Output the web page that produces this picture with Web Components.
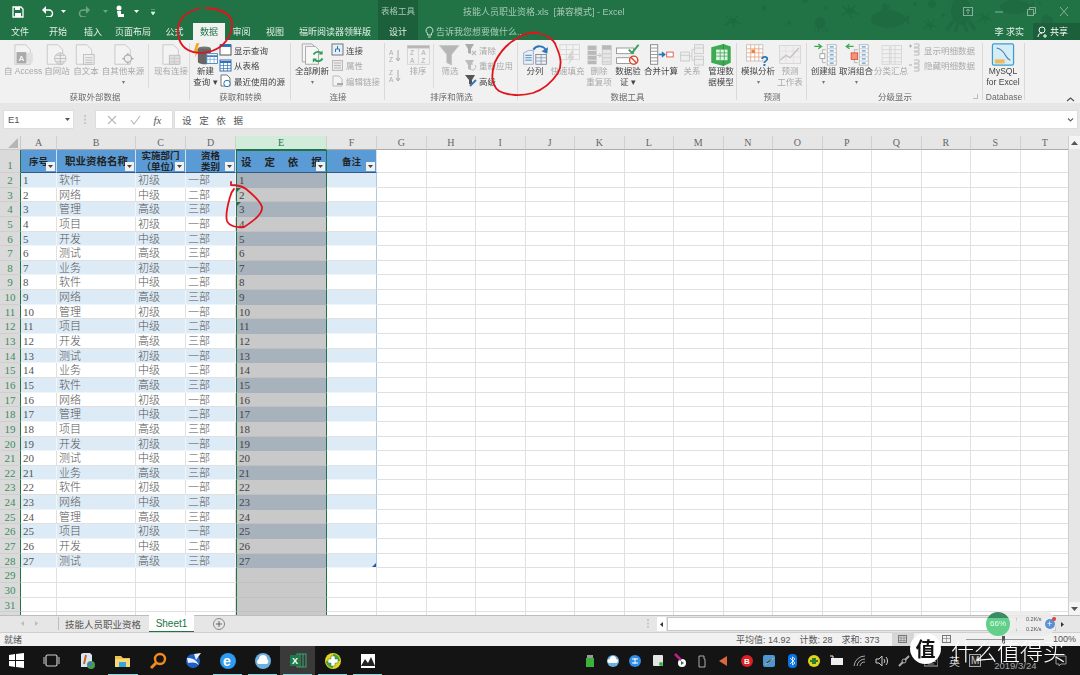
<!DOCTYPE html>
<html lang="zh">
<head>
<meta charset="utf-8">
<title>Excel</title>
<style>
  html, body { margin: 0; padding: 0; background: #e6e6e6; }
  body { width: 1080px; height: 675px; overflow: hidden; font-family: "Liberation Sans", "Noto Sans CJK SC", sans-serif; }
</style>
</head>
<body>
<excel-app>
  <excel-titlebar></excel-titlebar>
  <excel-ribbon>
    <rb-group w="190" label="获取外部数据" gap="4">
      <rb-big w="38" icon="access" off>自 Access</rb-big>
      <rb-big w="30" icon="web" off>自网站</rb-big>
      <rb-big w="28" icon="text" off>自文本</rb-big>
      <rb-big w="46" icon="other" off caret>自其他来源</rb-big>
      <rb-sep></rb-sep>
      <rb-big w="40" icon="exist" off>现有连接</rb-big>
    </rb-group>
    <rb-group w="101" label="获取和转换" gap="2">
      <rb-big w="27" icon="query">新建<br>查询 ▾</rb-big>
      <rb-col>
        <rb-small icon="showq">显示查询</rb-small>
        <rb-small icon="table">从表格</rb-small>
        <rb-small icon="recent">最近使用的源</rb-small>
      </rb-col>
    </rb-group>
    <rb-group w="94" label="连接" gap="2">
      <rb-big w="38" icon="refresh" caret>全部刷新</rb-big>
      <rb-col>
        <rb-small icon="conn">连接</rb-small>
        <rb-small icon="prop" off>属性</rb-small>
        <rb-small icon="link" off>编辑链接</rb-small>
      </rb-col>
    </rb-group>
    <rb-group w="133" label="排序和筛选" gap="4">
      <rb-col narrow>
        <rb-small icon="az" off></rb-small>
        <rb-small icon="za" off></rb-small>
      </rb-col>
      <rb-big w="26" icon="sort" off>排序</rb-big>
      <rb-sep></rb-sep>
      <rb-big w="28" icon="filter" off>筛选</rb-big>
      <rb-col>
        <rb-small icon="clear" off>清除</rb-small>
        <rb-small icon="reapply" off>重新应用</rb-small>
        <rb-small icon="adv">高级</rb-small>
      </rb-col>
    </rb-group>
    <rb-group w="219" label="数据工具" gap="3">
      <rb-big w="28" icon="split">分列</rb-big>
      <rb-big w="37" icon="flash" off>快速填充</rb-big>
      <rb-big w="26" icon="dedup" off>删除<br>重复项</rb-big>
      <rb-big w="32" icon="valid">数据验<br>证 ▾</rb-big>
      <rb-big w="34" icon="merge">合并计算</rb-big>
      <rb-big w="28" icon="rel" off>关系</rb-big>
      <rb-big w="30" icon="model">管理数<br>据模型</rb-big>
    </rb-group>
    <rb-group w="70" label="预测" gap="1">
      <rb-big w="40" icon="whatif" caret>模拟分析</rb-big>
      <rb-big w="24" icon="fore" off>预测<br>工作表</rb-big>
    </rb-group>
    <rb-group w="176" label="分级显示" gap="1" launcher>
      <rb-big w="31" icon="group" caret>创建组</rb-big>
      <rb-big w="34" icon="ungroup" caret>取消组合</rb-big>
      <rb-big w="36" icon="subtotal" off>分类汇总</rb-big>
      <rb-col>
        <rb-small icon="plus" off>显示明细数据</rb-small>
        <rb-small icon="minus" off>隐藏明细数据</rb-small>
      </rb-col>
    </rb-group>
    <rb-group w="42" label="Database" gap="0">
      <rb-big w="40" icon="mysql">MySQL<br>for Excel</rb-big>
    </rb-group>
    <rb-collapse></rb-collapse>
  </excel-ribbon>
  <excel-formula></excel-formula>
  <excel-sheet></excel-sheet>
  <excel-tabs></excel-tabs>
  <excel-status></excel-status>
  <win-taskbar></win-taskbar>
  <pen-marks></pen-marks>
  <speed-ball></speed-ball>
  <site-mark></site-mark>
</excel-app>

<script>
const ICONS = {
  access: `<path d="M6 2h13l6 6v18H6z" fill="#f4f4f4" stroke="#b5b5b5"/><rect x="12" y="12" width="16" height="12" fill="#ddd"/><rect x="8" y="11" width="12" height="14" fill="#999"/><text x="10.5" y="22" font-size="10" font-weight="700" fill="#f4f4f4" font-family="Liberation Sans">A</text>`,
  web: `<path d="M4 2h13l6 6v18H4z" fill="#f4f4f4" stroke="#b5b5b5"/><circle cx="20" cy="19" r="7" fill="#eee" stroke="#aaa"/><path d="M13 19h14M20 12v14M15 15h10M15 23h10" stroke="#aaa" fill="none"/>`,
  text: `<path d="M4 2h13l6 6v18H4z" fill="#f4f4f4" stroke="#b5b5b5"/><rect x="13" y="14" width="13" height="12" fill="#eee" stroke="#aaa"/><path d="M15 18h9M15 21h9M15 24h9" stroke="#aaa"/>`,
  other: `<path d="M6 2h13l6 6v18H6z" fill="#f4f4f4" stroke="#b5b5b5"/><circle cx="22" cy="19" r="4.500" fill="#eee" stroke="#999" stroke-width="1.400"/><path d="M22 12v3M22 23v3M15 19h3M26 19h3" stroke="#999" stroke-width="1.400"/>`,
  exist: `<path d="M6 2h13l6 6v18H6z" fill="#f4f4f4" stroke="#b5b5b5"/><path d="M14 15h13v11H14z" fill="#ddd" stroke="#aaa"/><path d="M14 19h13M14 23h13M20 15v11" stroke="#bbb"/>`,
  query: `<path d="M4 0l-3 10h3l-2 8 7-11H5l3-7z" fill="#f5a623"/><ellipse cx="14" cy="7" rx="8" ry="3" fill="#777"/><path d="M6 7v16c0 2 4 3 8 3h3V12h5V7z" fill="#666"/><rect x="17" y="13" width="13" height="12" fill="#fff" stroke="#2e75b6"/><path d="M17 16h13" stroke="#2e75b6" stroke-width="2"/><path d="M17 20h13M21 16v9M26 16v9" stroke="#6a9fd0" stroke-width=".8"/>`,
  refresh: `<path d="M4 1h12l4 4v18H4z" fill="#f7f7f7" stroke="#999"/><path d="M8 4h12l4 4v18H8z" fill="#f7f7f7" stroke="#999"/><path d="M18 14a6 6 0 0 1 10-1M29 19a6 6 0 0 1-10 1" stroke="#2e9e5b" stroke-width="2.400" fill="none"/><path d="M29 9v5h-5zM17 24v-5h5z" fill="#2e9e5b"/>`,
  sort: `<rect x="3" y="3" width="27" height="23" fill="#f2f2f2" stroke="#c8c8c8"/><rect x="3" y="3" width="27" height="3.500" fill="#aaa"/><path d="M16.500 6v20" stroke="#c8c8c8"/><text x="6" y="15" font-size="8" fill="#999" font-family="Liberation Sans">Z</text><text x="6" y="24" font-size="8" fill="#999" font-family="Liberation Sans">A</text><text x="20" y="15" font-size="8" fill="#999" font-family="Liberation Sans">A</text><text x="20" y="24" font-size="8" fill="#999" font-family="Liberation Sans">Z</text>`,
  filter: `<path d="M3 3h24L18 14v13l-6-3V14z" fill="#a8a8a8" stroke="#bbb"/>`,
  split: `<path d="M14 8a9 9 0 0 1 16 2" fill="none" stroke="#2e75b6" stroke-width="2.400"/><path d="M32 5l-1 8-7-3z" fill="#2e75b6"/><path d="M2 12l6-3h6v17H2z" fill="#e9eef5" stroke="#8da3bd"/><path d="M4 15h8M4 18h8M4 21h8" stroke="#2e75b6"/><rect x="17" y="14" width="13" height="12" fill="#eef2f7" stroke="#778"/><path d="M17 18h13M17 22h13M23.500 14v12" stroke="#89a"/>`,
  flash: `<rect x="6" y="2" width="24" height="18" fill="#f4f4f4" stroke="#ccc"/><path d="M6 8h24M6 14h24M14 2v18M22 2v18" stroke="#ccc"/><path d="M20 10l-5 9h4l-3 8 8-11h-4l3-6z" fill="#ccc"/>`,
  dedup: `<rect x="2" y="3" width="11" height="23" fill="#aaa"/><path d="M2 9h11M2 15h11M2 21h11" stroke="#eee"/><rect x="20" y="3" width="11" height="23" fill="#e4e4e4" stroke="#bbb"/><rect x="20" y="3" width="11" height="5" fill="#aaa"/><path d="M20 13h11M20 18h11M20 23h11" stroke="#bbb"/><path d="M13 15h5M16 12.500l3 2.500-3 2.500" stroke="#aaa" fill="none"/>`,
  valid: `<rect x="2" y="6" width="21" height="7" fill="#fff" stroke="#888"/><rect x="2" y="18" width="21" height="7" fill="#fff" stroke="#888"/><path d="M17 8l4 4 8-10" stroke="#2e9e5b" stroke-width="2.400" fill="none"/><circle cx="23" cy="21" r="5" fill="#fff" stroke="#d9472b" stroke-width="1.800"/><path d="M19.500 17.500l7 7" stroke="#d9472b" stroke-width="1.800"/>`,
  merge: `<rect x="3" y="2" width="9" height="24" fill="#fff" stroke="#777"/><path d="M3 6h9M3 10h9M3 14h9M3 18h9M3 22h9" stroke="#888"/><path d="M13 14h6" stroke="#2e75b6" stroke-width="2"/><path d="M17 10l5 4-5 4z" fill="#2e75b6"/><rect x="23" y="11" width="8" height="6" fill="#fff" stroke="#d9472b"/>`,
  rel: `<rect x="2" y="11" width="11" height="11" fill="#eee" stroke="#bbb"/><rect x="19" y="2" width="11" height="11" fill="#eee" stroke="#bbb"/><rect x="19" y="16" width="11" height="11" fill="#eee" stroke="#bbb"/><path d="M13 16h3V8h3M16 16v5h3M2 15h11M19 6h11M19 20h11" stroke="#bbb" fill="none"/>`,
  model: `<path d="M4 5l15-4 9 3v20l-9 4-15-4z" fill="#3cab52"/><path d="M19 1v27" stroke="#2b8a3e"/><rect x="10" y="8" width="14" height="13" fill="#e6f5e8"/><path d="M10 12h14M10 16h14M15 8v13M20 8v13" stroke="#3cab52"/>`,
  whatif: `<rect x="2" y="2" width="20" height="20" fill="#fff" stroke="#bbb"/><path d="M2 7h20M2 12h20M2 17h20M7 2v20M12 2v20M17 2v20" stroke="#e8a27c"/><rect x="8" y="8" width="4" height="4" fill="#ed7d31"/><text x="19" y="28" font-size="17" font-weight="700" fill="#2e75b6" font-family="Liberation Sans">?</text>`,
  fore: `<rect x="3" y="3" width="26" height="22" fill="#efefef" stroke="#ccc"/><path d="M3 10h26M3 17h26M11 3v22M20 3v22" stroke="#ddd"/><path d="M4 21l7-6 5 3 11-12" stroke="#c4b2b2" stroke-width="1.600" fill="none"/>`,
  group: `<path d="M4 4h9M9 1l4 3-4 3" stroke="#3cab52" stroke-width="1.600" fill="none"/><rect x="20" y="2" width="11" height="25" fill="#fff" stroke="#aaa"/><path d="M20 7h11M20 12h11M20 17h11M20 22h11" stroke="#bbb"/><path d="M23 4.500h5M23 9.500h5M23 14.500h5M23 19.500h5M23 24.500h5" stroke="#5b9bd5" stroke-width="1.500"/><path d="M18 8h-4v16h4" stroke="#aaa" fill="none"/><rect x="11" y="13" width="6" height="6" fill="#fff" stroke="#999"/>`,
  ungroup: `<path d="M13 4H4M8 1L4 4l4 3" stroke="#3cab52" stroke-width="1.600" fill="none"/><rect x="20" y="2" width="11" height="25" fill="#fff" stroke="#aaa"/><path d="M20 7h11M20 12h11M20 17h11M20 22h11" stroke="#bbb"/><path d="M23 4.500h5M23 9.500h5M23 14.500h5M23 19.500h5M23 24.500h5" stroke="#5b9bd5" stroke-width="1.500"/><path d="M18 8h-4v16h4" stroke="#aaa" fill="none"/><rect x="10" y="12" width="8" height="8" fill="#f3937c" stroke="#d9472b"/>`,
  subtotal: `<rect x="5" y="3" width="9" height="23" fill="#f2f2f2" stroke="#ccc"/><rect x="16" y="3" width="13" height="23" fill="#f2f2f2" stroke="#ccc"/><path d="M5 8h24M5 13h24M5 18h24M5 23h24M21 3v23" stroke="#ccc"/>`,
  mysql: `<rect x="3" y="1" width="26" height="26" rx="2" fill="#d6ecf6" stroke="#3a9ecb" stroke-width="1.500"/><path d="M8 6c6 1 9 5 11 9s4 5 6 6" stroke="#4b88b4" stroke-width="1.500" fill="none"/><rect x="6" y="20" width="12" height="5" fill="#f0b95c"/>`,
  showq: `<rect x="1" y="2" width="11" height="10" fill="#fff" stroke="#555"/><rect x="1" y="1" width="11" height="3" fill="#2e75b6"/>`,
  table: `<rect x="1" y="1" width="11" height="11" fill="#fff" stroke="#2e75b6"/><path d="M1 3h11" stroke="#2e75b6" stroke-width="2"/><path d="M1 6.500h11M1 9.500h11M4.500 3v9M8.500 3v9" stroke="#2e75b6" stroke-width=".7"/>`,
  recent: `<path d="M2 1h6l3 3v8H2z" fill="#fff" stroke="#777"/><circle cx="8" cy="9.500" r="3.200" fill="#fff" stroke="#2e75b6"/>`,
  conn: `<rect x="1" y="1" width="11" height="11" fill="#e6f0fa" stroke="#777"/><path d="M6.500 3v3M4.500 6h4M4.500 6v3M8.500 6v3" stroke="#2e75b6"/>`,
  prop: `<rect x="1.500" y="1.500" width="10" height="10" fill="#e8e8e8" stroke="#bbb"/><path d="M3 4h7M3 6.500h7M3 9h7" stroke="#bbb"/>`,
  link: `<path d="M2 2h6l3 3v7H2z" fill="#f4f4f4" stroke="#bbb"/><path d="M6 10h6" stroke="#aaa" stroke-width="2"/>`,
  az: `<text x="0" y="6" font-size="6.500" fill="#aaa" font-family="Liberation Sans">A</text><text x="0" y="13" font-size="6.500" fill="#aaa" font-family="Liberation Sans">Z</text><path d="M9 1v10M7 9l2 3 2-3" stroke="#aaa" fill="none"/>`,
  za: `<text x="0" y="6" font-size="6.500" fill="#aaa" font-family="Liberation Sans">Z</text><text x="0" y="13" font-size="6.500" fill="#aaa" font-family="Liberation Sans">A</text><path d="M9 1v10M7 9l2 3 2-3" stroke="#aaa" fill="none"/>`,
  clear: `<path d="M1 1h9L7 6v5L4 10V6z" fill="#aaa"/><path d="M8 8l4 4M12 8l-4 4" stroke="#bbb" stroke-width="1.200"/>`,
  reapply: `<path d="M1 1h9L7 6v5L4 10V6z" fill="#bbb"/><path d="M11 6a3 3 0 1 1-2-1" stroke="#bbb" fill="none"/>`,
  adv: `<path d="M1 1h10L8 6v5L5 10V6z" fill="#555"/><path d="M6 12l6-6" stroke="#2e75b6" stroke-width="1.800"/>`,
  plus: `<path d="M0 3h3M1.500 1.500v3" stroke="#aaa"/><path d="M5 1h5v3H5M5 5h5v3H5M5 9h5v3H5" stroke="#bbb" fill="none"/>`,
  minus: `<path d="M0 6h3" stroke="#aaa"/><path d="M5 1h5v3H5M5 5h5v3H5M5 9h5v3H5" stroke="#bbb" fill="none"/>`
};

class ExcelApp extends HTMLElement {
  constructor() {
    super();
    this.attachShadow({ mode: "open" });
    this.shadowRoot.innerHTML = `
      <style>
        :host { display: flex; flex-direction: column; position: relative; width: 1080px; height: 675px; overflow: hidden;
          font-family: "Liberation Sans", "Noto Sans CJK SC", sans-serif; filter: blur(.35px); }
      </style>
      <slot></slot>`;
  }
}

class ExcelTitlebar extends HTMLElement {
  constructor() {
    super();
    this.attachShadow({ mode: "open" });
    const tabs = [["文件", 40], ["开始", 36], ["插入", 34], ["页面布局", 46], ["公式", 37], ["数据", 32], ["审阅", 33], ["视图", 34], ["福昕阅读器领鲜版", 86]];
    const star = (x, y, s) => `<g transform="translate(${x} ${y}) scale(${s})"><ellipse rx="4" ry="2.500"/><path d="M-3-1l-4-4M-1-2l-1-4M2-2l3-4M3 1l5 2M-3 1l-5 3M0 2l1 4" stroke="#1e6b42" stroke-width="1.500"/></g>`;
    this.shadowRoot.innerHTML = `
      <style>
        :host { display: flex; flex-direction: column; height: 40px; background: #217346; color: #fff; position: relative; font-size: 9px; flex: none; }
        .doodles { position: absolute; left: 0; top: 0; pointer-events: none; }
        .top { display: flex; height: 23px; align-items: center; position: relative; }
        .qa { display: flex; width: 378px; align-items: center; flex: none; }
        .qa span { display: flex; justify-content: center; flex: none; }
        .ctx { width: 40px; height: 23px; background: #1c5f3b; color: #a9c7b6; line-height: 23px; text-align: center; flex: none; font-size: 8.500px; }
        .title { flex: none; margin-left: 45px; color: #a7c8b5; font-size: 9px; white-space: pre; }
        .win { margin-left: auto; display: flex; align-items: center; opacity: .45; }
        .win span { width: 32px; display: flex; justify-content: center; }
        .bottom { display: flex; height: 17px; align-items: stretch; position: relative; }
        .tab { display: flex; align-items: center; justify-content: center; flex: none; color: #e4efe8; }
        .tab.on { background: #f1f1f1; color: #217346; }
        .tab.ctxt { width: 40px; background: #1c5f3b; }
        .tell { display: flex; align-items: center; gap: 2px; margin-left: 7px; color: #a9cbb7; }
        .user { margin-left: auto; display: flex; align-items: center; }
        .name { margin-right: 9px; color: #e4efe8; }
        .share { width: 47px; height: 100%; background: #1c5f3b; display: flex; align-items: center; gap: 2px; padding-left: 4px; box-sizing: border-box; }
      </style>
      <svg class="doodles" width="1080" height="40" fill="#1e6b42">
        ${star(733, 21, 1)}${star(850, 11, 1.100)}${star(930, 25, .9)}${star(985, 18, .9)}
        <circle cx="764" cy="8" r="2.800"/><circle cx="789" cy="23" r="2"/><circle cx="825" cy="8" r="1.500"/><circle cx="805" cy="0" r="3"/>
        <circle cx="915" cy="4" r="2"/><circle cx="943" cy="15" r="2"/><circle cx="1040" cy="3" r="1.500"/><circle cx="1047" cy="21" r="6"/><circle cx="932" cy="4" r="4"/>
        <ellipse cx="820" cy="23" rx="5" ry="6"/><path d="M816 27l-2 5M819 28l-1 4M822 28l1 4M825 27l2 5" stroke="#1e6b42" stroke-width="1.300"/>
        <ellipse cx="888" cy="19" rx="17" ry="9"/><path d="M881 11h7V6h-5l2-3" stroke="#1e6b42" stroke-width="2"/><path d="M903 19l7-5-1 6 1 6z"/>
        <ellipse cx="961" cy="11" rx="10" ry="14"/><path d="M953 21l-6 9M958 23l-3 9M964 23l3 9M969 21l6 9" stroke="#1e6b42" stroke-width="3.500" fill="none"/>
        <ellipse cx="1015" cy="7" rx="15" ry="7"/><path d="M1028 7l6-6v12z"/>
      </svg>
      <div class="top">
        <div class="qa">
          <span style="width:36px">
            <svg width="12" height="12" viewBox="0 0 12 12"><path d="M1 1h8l2 2v8H1z" fill="none" stroke="#fff" stroke-width="1.300"/><rect x="3" y="1" width="5" height="3" fill="#fff"/><rect x="3" y="7" width="6" height="4" fill="#fff"/></svg>
          </span>
          <span style="width:22px">
            <svg width="13" height="11" viewBox="0 0 13 11"><path d="M2 4h6a3.500 3.500 0 0 1 0 7H5" fill="none" stroke="#fff" stroke-width="1.500"/><path d="M5 0L1 4l4 4z" fill="#fff"/></svg>
          </span>
          <span style="width:10px"><svg width="5" height="3"><path d="M0 0h5L2.500 3z" fill="#fff"/></svg></span>
          <span style="width:32px">
            <svg width="13" height="11" viewBox="0 0 13 11" opacity=".35"><path d="M11 4H5a3.500 3.500 0 0 0 0 7h3" fill="none" stroke="#fff" stroke-width="1.500"/><path d="M8 0l4 4-4 4z" fill="#fff"/></svg>
          </span>
          <span style="width:10px;opacity:.35"><svg width="5" height="3"><path d="M0 0h5L2.500 3z" fill="#fff"/></svg></span>
          <span style="width:20px">
            <svg width="11" height="14" viewBox="0 0 11 14"><circle cx="4" cy="3" r="2.500" fill="#fff"/><path d="M2 6h4v3h3v3H3z" fill="#fff"/></svg>
          </span>
          <span style="width:12px"><svg width="5" height="3"><path d="M0 0h5L2.500 3z" fill="#fff"/></svg></span>
          <span style="width:22px"><svg width="5" height="6"><path d="M0 0h4M0 3h4L2 6z" stroke="#cfe" fill="#cfe" stroke-width=".6"/></svg></span>
        </div>
        <div class="ctx">表格工具</div>
        <div class="title">技能人员职业资格.xls  [兼容模式] - Excel</div>
        <div class="win">
          <span><svg width="10" height="9"><rect x=".5" y=".5" width="9" height="8" fill="none" stroke="#fff"/><path d="M5 2v5M3 4l2-2 2 2" stroke="#fff" fill="none"/></svg></span>
          <span><svg width="10" height="9"><path d="M0 5h8" stroke="#fff"/></svg></span>
          <span><svg width="10" height="9"><rect x=".5" y="2.500" width="6" height="6" fill="none" stroke="#fff"/><path d="M2.500 2V.5h6v6H7" fill="none" stroke="#fff"/></svg></span>
          <span><svg width="10" height="9"><path d="M1 0l8 9M9 0L1 9" stroke="#fff"/></svg></span>
        </div>
      </div>
      <div class="bottom">
        ${tabs.map(([t, w]) => `<div class="tab${t === "数据" ? " on" : ""}" style="width:${w}px">${t}</div>`).join("")}
        <div class="tab ctxt">设计</div>
        <div class="tell">
          <svg width="9" height="12" viewBox="0 0 9 12"><path d="M4.500 1a3.500 3.500 0 0 0-2 6.300V9h4V7.300A3.500 3.500 0 0 0 4.500 1zM3 11h3" fill="none" stroke="#cfe3d6"/></svg>
          告诉我您想要做什么...
        </div>
        <div class="user">
          <span class="name">李 求实</span>
          <div class="share">
            <svg width="11" height="12" viewBox="0 0 11 12"><circle cx="5" cy="4" r="3" fill="none" stroke="#fff"/><path d="M1 11c0-3 2-4 4-4M8 8v4M6 10h4" fill="none" stroke="#fff"/></svg>
            共享
          </div>
        </div>
      </div>`;
  }
}

class ExcelRibbon extends HTMLElement {
  constructor() {
    super();
    this.attachShadow({ mode: "open" });
    this.shadowRoot.innerHTML = `
      <style>
        :host { display: flex; height: 63px; background: #f1f1f1; flex: none; font-size: 8.500px; color: #444; position: relative; }
      </style>
      <slot></slot>`;
  }
}

class RbGroup extends HTMLElement {
  constructor() {
    super();
    this.attachShadow({ mode: "open" });
  }
  connectedCallback() {
    this.shadowRoot.innerHTML = `
      <style>
        :host { display: flex; flex-direction: column; flex: none; width: ${this.getAttribute("w")}px; box-sizing: border-box;
          position: relative; height: 63px; }
        :host::after { content: ""; position: absolute; right: 0; top: 3px; bottom: 3px; width: 1px; background: #dadada; }
        .body { flex: 1; display: flex; padding-left: ${this.getAttribute("gap")}px; min-height: 0; }
        .label { height: 12px; line-height: 12px; text-align: center; color: #6a6a6a; font-size: 8.500px; flex: none; }
        .launch { position: absolute; right: 5px; bottom: 4px; width: 4px; height: 4px; border: solid #bbb; border-width: 0 1px 1px 0; }
      </style>
      <div class="body"><slot></slot></div>
      <div class="label">${this.getAttribute("label")}</div>
      ${this.hasAttribute("launcher") ? '<div class="launch"></div>' : ""}`;
  }
}

class RbBig extends HTMLElement {
  constructor() {
    super();
    this.attachShadow({ mode: "open" });
  }
  connectedCallback() {
    const off = this.hasAttribute("off");
    this.shadowRoot.innerHTML = `
      <style>
        :host { display: flex; flex-direction: column; align-items: center; flex: none; width: ${this.getAttribute("w")}px;
          color: ${off ? "#a9a9a9" : "#444"}; padding-top: 3px; box-sizing: border-box; }
        svg { flex: none; display: block; opacity: ${off ? ".8" : "1"}; }
        .label { line-height: 11px; text-align: center; white-space: nowrap; }
        .caret { color: #777; font-size: 6px; line-height: 10px; }
      </style>
      <svg width="26" height="23" viewBox="0 0 32 28">${ICONS[this.getAttribute("icon")]}</svg>
      <div class="label"><slot></slot></div>
      ${this.hasAttribute("caret") ? '<div class="caret">▾</div>' : ""}`;
  }
}

class RbCol extends HTMLElement {
  constructor() {
    super();
    this.attachShadow({ mode: "open" });
    this.shadowRoot.innerHTML = `
      <style>
        :host { display: flex; flex-direction: column; padding-top: 2px; flex: none; }
        :host([narrow]) { width: 16px; padding-top: 8px; gap: 4px; }
      </style>
      <slot></slot>`;
  }
}

class RbSmall extends HTMLElement {
  constructor() {
    super();
    this.attachShadow({ mode: "open" });
  }
  connectedCallback() {
    const off = this.hasAttribute("off");
    this.shadowRoot.innerHTML = `
      <style>
        :host { display: flex; align-items: center; gap: 2px; height: 15.500px; white-space: nowrap; color: ${off ? "#a9a9a9" : "#444"}; }
        svg { flex: none; }
      </style>
      <svg width="13" height="13" viewBox="0 0 13 13">${ICONS[this.getAttribute("icon")]}</svg><slot></slot>`;
  }
}

class RbSep extends HTMLElement {
  constructor() {
    super();
    this.attachShadow({ mode: "open" });
    this.shadowRoot.innerHTML = `
      <style>:host { display: block; width: 1px; background: #dcdcdc; margin: 4px 2px 3px; flex: none; }</style>`;
  }
}

class RbCollapse extends HTMLElement {
  constructor() {
    super();
    this.attachShadow({ mode: "open" });
    this.shadowRoot.innerHTML = `
      <style>:host { display: block; position: absolute; right: 5px; bottom: 3px; width: 9px; height: 6px; }</style>
      <svg width="9" height="6"><path d="M1 5l3.500-3L8 5" fill="none" stroke="#555" stroke-width="1.300"/></svg>`;
  }
}

class ExcelFormula extends HTMLElement {
  constructor() {
    super();
    this.attachShadow({ mode: "open" });
    this.shadowRoot.innerHTML = `
      <style>
        :host { display: flex; height: 33px; background: #e6e6e6; flex: none; box-sizing: border-box; padding: 8px 3px 8px 4px; align-items: stretch; font-size: 9.500px; color: #555; }
        .box { background: #fff; display: flex; align-items: center; box-shadow: 0 0 0 .5px #d4d4d4; }
        .name { width: 69px; padding: 0 3px 0 4px; box-sizing: border-box; justify-content: space-between; }
        .dots { width: 23px; display: flex; align-items: center; justify-content: center; color: #aaa; }
        .fx { width: 76px; justify-content: space-around; padding: 0 4px; box-sizing: border-box; }
        .input { flex: 1; margin-left: 3px; padding: 0 3px 0 7px; justify-content: space-between; letter-spacing: 2.500px; font-size: 9.500px; }
      </style>
      <div class="box name">E1 <svg width="5" height="3"><path d="M0 0h5L2.500 3z" fill="#555"/></svg></div>
      <div class="dots"><svg width="2" height="9"><path d="M1 0v2M1 3.500v2M1 7v2" stroke="#aaa"/></svg></div>
      <div class="box fx">
        <svg width="10" height="10"><path d="M1 1l8 8M9 1L1 9" stroke="#bbb" stroke-width="1.200"/></svg>
        <svg width="11" height="10"><path d="M1 5l3 4 6-8" stroke="#bbb" stroke-width="1.200" fill="none"/></svg>
        <span style="font-family:'Liberation Serif',serif;font-style:italic;font-size:11px;letter-spacing:0">fx</span>
      </div>
      <div class="box input">设 定 依 据 <svg width="7" height="4"><path d="M1 .5l2.500 2.500L6 .5" stroke="#666" stroke-width="1.200" fill="none"/></svg></div>`;
  }
}

class ExcelSheet extends HTMLElement {
  constructor() {
    super();
    this.attachShadow({ mode: "open" });
    const names = ["软件", "网络", "管理", "项目", "开发", "测试", "业务"];
    const levels = ["初级", "中级", "高级"];
    const depts = ["一部", "二部", "三部"];
    const cols = "ABCDEFGHIJKLMNOPQRST".split("");
    const fb = '<i class="fb"><svg width="5" height="3"><path d="M0 0h5L2.500 3z" fill="#444"/></svg></i>';

    let html = `<div class="c corner"><svg width="21" height="14"><path d="M18 2v10H8z" fill="#b5b5b5"/></svg></div>`;
    cols.forEach(c => { html += `<div class="c colh${c === "E" ? " sel" : ""}">${c}</div>`; });

    // header row
    html += `<div class="c rowh r1">1</div>`;
    const heads = [["序号", ""], ["职业资格名称", "wide"], ["实施部门<br>（单位）", "two"], ["资格<br>类别", "two"], ["设　定　依　据", "sele"], ["备注", ""]];
    heads.forEach(([t, k]) => { html += `<div class="c th ${k}"><span>${t}</span>${fb}</div>`; });
    for (let k = 6; k < cols.length; k++) html += `<div class="c"></div>`;

    for (let r = 2; r <= 32; r++) {
      const i = r - 2;
      const hasData = i < 27;
      const band = hasData && i % 2 === 0;
      html += `<div class="c rowh">${r}</div>`;
      const vals = hasData ? [i + 1, names[i % 7], levels[i % 3], depts[i % 3], i + 1, ""] : ["", "", "", "", "", ""];
      vals.forEach((v, j) => {
        let cl = "c td";
        if (band) cl += " band";
        if (j === 4) cl += " sele " + (band ? "gb" : "gw");
        if (j === 4 && (i === 1 || i === 2)) cl += " flag";
        if (j === 5 && i === 26) cl += " end";
        if (j === 5 && hasData) cl += " tbr";
        html += `<div class="${cl}">${v}</div>`;
      });
      for (let k = 6; k < cols.length; k++) html += `<div class="c"></div>`;
    }

    this.shadowRoot.innerHTML = `
      <style>
        :host { display: flex; flex: none; height: 479px; margin-top: 0; background: #fff; font-family: "Liberation Serif", "Noto Sans CJK SC", sans-serif; }
        .wrap { width: 1068px; overflow: hidden; flex: none; }
        .grid { display: grid; grid-template-columns: 21px 36px 79px 50px 50px 91px 50px repeat(14, 49.500px);
          grid-template-rows: 14px 23px repeat(31, 14.650px); }
        .c { box-sizing: border-box; border-right: 1px solid #e0e0e0; border-bottom: 1px solid #e0e0e0; font-size: 11px; overflow: hidden; white-space: nowrap; position: relative; }
        .corner { background: #e6e6e6; border-color: #c8c8c8; padding: 0; }
        .colh { background: #e6e6e6; color: #666; text-align: center; line-height: 13px; font-size: 10px; border-color: #d0d0d0; border-bottom-color: #ababab; }
        .colh.sel { background: #d2ecdc; color: #217346; border-bottom: 1.500px solid #217346; }
        .rowh { background: #dadada; color: #3f8a60; text-align: center; line-height: 14px; font-size: 11px; border-color: #cfcfcf; border-right: 1.500px solid #217346; }
        .r1 { line-height: 30px; }
        .th { background: #5b9bd5; color: #222; font-weight: 700; font-size: 9.500px; font-family: "Noto Sans CJK SC", sans-serif; line-height: 10px; display: flex;
          align-items: center; justify-content: center; text-align: center; border-bottom: 1.500px solid #33597f; border-right-color: #cfe0ef; }
        .th.wide { font-size: 10.500px; justify-content: flex-start; padding-left: 8px; }
        .th.two { line-height: 11px; padding-bottom: 1px; }
        .th.sele { border-left: 1.500px solid #217346; border-right: 1.500px solid #217346; border-top: 1.500px solid #217346; font-size: 10.500px; letter-spacing: 1.200px; background: #5b9bd5; justify-content: flex-start; padding-left: 4px; }
        .th span { overflow: visible; }
        .fb { position: absolute; right: 1px; bottom: 1px; width: 9px; height: 9px; background: #f1f1f1; display: flex; align-items: center; justify-content: center; }
        .td { color: #555; line-height: 14px; padding-left: 2px; border-color: #e0e0e0; font-family: "Liberation Serif", "Noto Sans CJK SC", sans-serif; font-weight: 300; }
        .band { background: #ddebf7; border-color: #eef5fb; }
        .sele.td { border-left: 1.500px solid #217346; border-right: 1.500px solid #217346; background: #c9c9c9; border-bottom-color: #c0c0c0; padding-left: 2px; color: #444; }
        .gb.td { background: #a8b2bd; border-bottom-color: #a8b2bd; }
        .tbr { border-right-color: #a9cbe8; }
        .flag::before { content: ""; position: absolute; left: 0; top: 0; border: 2px solid transparent; border-top-color: #217346; border-left-color: #217346; }
        .end::after { content: ""; position: absolute; right: 0; bottom: 0; border: 2.500px solid transparent; border-right-color: #2f4fb5; border-bottom-color: #2f4fb5; }
        .vbar { flex: 1; background: #e6e6e6; position: relative; display: flex; flex-direction: column; align-items: center; border-left: 1px solid #cfcfcf; }
        .vbar i { display: flex; width: 100%; height: 13px; background: #f4f4f4; align-items: center; justify-content: center; flex: none; }
        .vbar b { display: block; flex: 1; width: 100%; }
      </style>
      <div class="wrap"><div class="grid">${html}</div></div>
      <div class="vbar">
        <i><svg width="7" height="4"><path d="M0 4h7L3.500 0z" fill="#555"/></svg></i>
        <b></b>
        <i><svg width="7" height="4"><path d="M0 0h7L3.500 4z" fill="#555"/></svg></i>
      </div>`;
  }
}

class ExcelTabs extends HTMLElement {
  constructor() {
    super();
    this.attachShadow({ mode: "open" });
    this.shadowRoot.innerHTML = `
      <style>
        :host { display: flex; height: 17px; flex: none; background: #e6e6e6; align-items: stretch; font-size: 9.500px; color: #555; box-shadow: inset 0 1px 0 #bdbdbd; }
        .nav { width: 58px; display: flex; align-items: center; justify-content: center; gap: 11px; flex: none; border-right: 1px solid #bdbdbd; margin: 2px 0; }
        .t { display: flex; align-items: center; flex: none; }
        .t1 { width: 90px; padding-left: 6px; box-sizing: border-box; }
        .t2 { width: 45px; background: #fff; color: #217346; justify-content: center; border-bottom: 1.500px solid #217346; box-sizing: border-box; font-size: 10px; }
        .add { margin-left: 19px; width: 12px; height: 12px; border: 1px solid #888; border-radius: 50%; align-self: center; display: flex; align-items: center; justify-content: center; flex: none; box-sizing: border-box; }
        .dots { margin-left: 422px; width: 3px; display: flex; align-items: center; flex: none; }
        .hbar { margin-left: 7px; display: flex; align-items: center; flex: none; padding-top: 1px; }
        .b { width: 9px; height: 14px; background: #fff; display: flex; align-items: center; justify-content: center; }
        .track { width: 389px; height: 14px; background: #fff; margin-left: 1px; box-shadow: inset 0 0 0 1px #c8c8c8; }
        .r { background: #e6e6e6; width: 12px; margin-left: 0; }
      </style>
      <div class="nav">
        <svg width="3" height="5"><path d="M3 0v5L0 2.500z" fill="#bbb"/></svg>
        <svg width="3" height="5"><path d="M0 0v5l3-2.500z" fill="#bbb"/></svg>
      </div>
      <div class="t t1">技能人员职业资格</div>
      <div class="t t2">Sheet1</div>
      <div class="add"><svg width="8" height="8"><path d="M4 1v6M1 4h6" stroke="#666"/></svg></div>
      <div class="dots"><svg width="2" height="9"><path d="M1 0v2M1 3.500v2M1 7v2" stroke="#aaa"/></svg></div>
      <div class="hbar">
        <div class="b"><svg width="3" height="5"><path d="M3 0v5L0 2.500z" fill="#333"/></svg></div>
        <div class="track"></div>
        <div class="b r"><svg width="3" height="5"><path d="M0 0v5l3-2.500z" fill="#333"/></svg></div>
      </div>`;
  }
}

class ExcelStatus extends HTMLElement {
  constructor() {
    super();
    this.attachShadow({ mode: "open" });
    this.shadowRoot.innerHTML = `
      <style>
        :host { display: flex; height: 14px; flex: none; background: #f1f1f1; font-size: 9px; color: #555; align-items: center; box-shadow: inset 0 1px 0 #cfcfcf; padding-left: 4px; }
        .stats { margin-left: 714px; display: flex; gap: 9px; flex: none; }
        .views { display: flex; margin-left: 12px; align-self: stretch; flex: none; }
        .views span { width: 22px; display: flex; align-items: center; justify-content: center; }
        .views .on { background: #d6d6d6; }
        .slider { margin-left: 8px; width: 78px; height: 1px; background: #999; position: relative; flex: none; }
        .slider::after { content: ""; position: absolute; left: 36px; top: -4px; width: 3px; height: 9px; background: #555; }
        .zoom { margin-left: auto; margin-right: 4px; }
      </style>
      <span>就绪</span>
      <div class="stats"><span>平均值: 14.92</span><span>计数: 28</span><span>求和: 373</span></div>
      <div class="views">
        <span class="on"><svg width="9" height="8"><rect x=".5" y=".5" width="8" height="7" fill="none" stroke="#777"/><path d="M0 3h9M0 5.500h9M3 0v8M6 0v8" stroke="#777" stroke-width=".6"/></svg></span>
        <span><svg width="9" height="8"><rect x=".5" y=".5" width="8" height="7" fill="none" stroke="#777"/><rect x="2" y="2" width="5" height="4" fill="none" stroke="#777" stroke-width=".6"/></svg></span>
        <span><svg width="9" height="8"><rect x=".5" y=".5" width="8" height="7" fill="none" stroke="#777"/><path d="M0 3.500h9M4.500 0v8" stroke="#777" stroke-width=".6"/></svg></span>
      </div>
      <div class="slider"></div>
      <div class="zoom">100%</div>`;
  }
}

class WinTaskbar extends HTMLElement {
  constructor() {
    super();
    this.attachShadow({ mode: "open" });
    const apps = [
      [34, `<path d="M1 3l6-1v6H1zM8 2l8-1v7H8zM1 9h6v6l-6-1zM8 9h8v7l-8-1z" fill="#fff"/>`, 0],
      [35, `<rect x="3" y="3" width="11" height="11" rx="1.500" fill="none" stroke="#ccc" stroke-width="1.200"/><path d="M1 5v7M16 5v7" stroke="#ccc"/>`, 0],
      [36, `<path d="M5 1h7l2 2v12H3V2z" fill="#d9e5f2"/><path d="M8 3l-2 9" stroke="#c62" stroke-width="2"/><circle cx="13" cy="13" r="4" fill="#4d9c4d"/><circle cx="12" cy="12" r="2" fill="#3b7ecc"/>`, 0],
      [36, `<path d="M1 4h6l2 2h7v9H1z" fill="#f0c34f"/><rect x="1" y="7" width="15" height="8" fill="#f7d978"/><rect x="5" y="10" width="7" height="5" fill="#3aa3dc"/>`, 1],
      [35, `<circle cx="10" cy="7" r="5" fill="none" stroke="#f28a1e" stroke-width="2.400"/><path d="M6 11l-5 5" stroke="#f28a1e" stroke-width="3"/>`, 0],
      [34, `<circle cx="9" cy="9" r="7" fill="#1f5fc4"/><path d="M3 6c5 0 9 1 12 7-3-3-7-3-11-2zM10 2l7-1-5 7z" fill="#e8f2ff"/>`, 0],
      [35, `<circle cx="9" cy="9" r="8" fill="#2d9bf0"/><text x="4" y="14" font-size="14" font-weight="700" fill="#fff" font-family="Liberation Sans">e</text>`, 1],
      [35, `<circle cx="9" cy="9" r="8" fill="#6cb0dd"/><path d="M4 12a3 3 0 0 1 1-5 4 4 0 0 1 8 0 3 3 0 0 1 0 5z" fill="#fff"/>`, 1],
      [35, `<rect x="8" y="2" width="9" height="13" fill="none" stroke="#3aa870"/><path d="M11 2v13M14 2v13" stroke="#3aa870"/><rect x="1" y="3" width="10" height="11" fill="#1f7a4a"/><text x="3" y="12" font-size="9" font-weight="700" fill="#fff" font-family="Liberation Sans">X</text>`, 2],
      [35, `<circle cx="9" cy="9" r="8" fill="#e6d21d"/><path d="M9 2a7 7 0 0 1 7 7H2a7 7 0 0 0 7 7z" fill="#46a73e"/><path d="M7 4h4v3h3v4h-3v3H7v-3H4V7h3z" fill="#fff" stroke="#2a7d2a" stroke-width=".5"/>`, 1],
      [35, `<rect x="2" y="2" width="14" height="14" fill="#fff"/><path d="M2 14l4-7 3 4 3-6 4 9z" fill="#222"/>`, 1]
    ];
    const tray = [
      [22, `<rect x="3" y="2" width="6" height="3" fill="#999"/><rect x="2" y="5" width="8" height="9" fill="#3bb33b"/>`],
      [21, `<circle cx="7" cy="8" r="6" fill="#6cb0dd"/><path d="M3 10a2 2 0 0 1 1-4 3 3 0 0 1 6 0 2 2 0 0 1 0 4z" fill="#fff"/>`],
      [23, `<circle cx="7" cy="8" r="6" fill="#2d8fe8"/><path d="M4 6h6M4 10h6M7 5v6" stroke="#fff"/>`],
      [23, `<rect x="2" y="2" width="10" height="11" rx="1" fill="#e4e4e4"/><circle cx="10" cy="11" r="2" fill="#3bb33b"/>`],
      [22, `<circle cx="9" cy="10" r="4" fill="#fff"/><path d="M2 1l6 6" stroke="#c0208a" stroke-width="2.500"/><path d="M8 8l3 2-3 2z" fill="#1f7a4a"/>`],
      [22, `<path d="M4 3h5v3h1v8H4z" fill="none" stroke="#aaa"/>`],
      [22, `<path d="M2 8l8-5v10z" fill="#d9673f"/>`],
      [23, `<circle cx="7" cy="8" r="6" fill="#dd1f26"/><text x="4" y="11" font-size="8" font-weight="700" fill="#fff" font-family="Liberation Sans">B</text>`],
      [22, `<rect x="1" y="2" width="12" height="12" rx="2" fill="#4a97d8"/><path d="M3 11c3 0 6-3 8-6" stroke="#e8c64c"/>`],
      [23, `<rect x="3" y="1" width="9" height="14" rx="4" fill="#0a74e6"/><path d="M5 5l5 5-2.500 2V4L10 6 5 11" stroke="#fff" fill="none" stroke-width=".8"/>`],
      [22, `<circle cx="7" cy="8" r="6" fill="#e6d21d"/><path d="M5 5h4v2h2v2H9v2H5V9H3V7h2z" fill="#2a7d2a"/>`],
      [23, `<rect x="1" y="5" width="12" height="7" fill="#eee"/><path d="M0 3h3v2" stroke="#eee" fill="none"/>`],
      [22, `<path d="M2 13a11 11 0 0 1 11-10M5 13a8 8 0 0 1 8-7M8 13a5 5 0 0 1 5-4" stroke="#aaa" fill="none"/>`],
      [21, `<path d="M2 6h3l3-3v10l-3-3H2z" fill="none" stroke="#ccc"/><path d="M10 6a3 3 0 0 1 0 4M12 4a6 6 0 0 1 0 8" stroke="#ccc" fill="none"/>`],
      [25, `<path d="M2 13l4-4M8 7l4-4" stroke="#aaa" stroke-width="2"/><circle cx="7" cy="8" r="2" fill="none" stroke="#aaa"/>`],
      [30, `<rect x="0" y="3" width="14" height="10" fill="none" stroke="#aaa"/><path d="M2 6h10M2 8.500h10M4 11h6" stroke="#aaa" stroke-width=".8"/>`]
    ];
    const appHtml = apps.map(([w, p, k]) => `<span class="a k${k}" style="width:${w}px"><svg width="18" height="18" viewBox="0 0 18 18">${p}</svg></span>`).join("");
    const trayHtml = tray.map(([w, p]) => `<span class="t" style="width:${w}px"><svg width="14" height="16" viewBox="0 0 14 16">${p}</svg></span>`).join("");
    this.shadowRoot.innerHTML = `
      <style>
        :host { display: flex; height: 29px; flex: none; background: #141414; align-items: stretch; color: #ccc; }
        .a { display: flex; align-items: center; justify-content: center; flex: none; box-sizing: border-box; position: relative; }
        .k1::after, .k2::after { content: ""; position: absolute; left: 3px; right: 3px; bottom: 0; height: 1.500px; background: #8fd6dc; }
        .k2 { background: #3a3a3a; }
        .tray { margin-left: 195px; display: flex; align-items: center; flex: none; }
        .t { display: flex; justify-content: center; flex: none; }
        .ime { font-size: 11px; display: flex; gap: 9px; margin-left: 3px; align-items: center; flex: none; }
        .ime b { font-weight: 400; font-size: 10px; border: 1px solid #aaa; padding: 0 1px; background: #222; line-height: 11px; }
        .clock { font-size: 9.500px; width: 62px; text-align: center; margin-left: 3px; color: #aaa; padding-top: 10px; flex: none; }
        .note { width: 30px; display: flex; justify-content: center; flex: none; }
      </style>
      ${appHtml}
      <div class="tray">
        ${trayHtml}
        <div class="ime"><span>英</span><b>M</b></div>
        <div class="clock">2019/3/24</div>
        <div class="note"><svg width="12" height="12"><path d="M1 1h10v8H6l-2 2V9H1z" fill="none" stroke="#999"/></svg></div>
      </div>`;
  }
}

class PenMarks extends HTMLElement {
  constructor() {
    super();
    this.attachShadow({ mode: "open" });
    this.shadowRoot.innerHTML = `
      <style>:host { display: block; position: absolute; left: 0; top: 0; width: 1080px; height: 675px; pointer-events: none; }</style>
      <svg width="1080" height="675" fill="none" stroke="#e0141c" stroke-width="1.800" stroke-linecap="round" stroke-linejoin="round">
        <path d="M200 8C193 10 182 14 179 24C176 34 179 45 188 50C197 55 211 53 220 47C228 41 233 31 232 22C230 13 220 9 206 8"/>
        <path d="M534 32C545 35 554 38 556 46C560 55 563 64 558 73C552 82 545 89 533 93C522 96 508 96 499 91C491 85 491 74 495 62C500 52 507 44 516 39C523 34 530 32 538 33"/>
        <path d="M231 182V185C235 185 242 186 246 189C252 194 260 200 262 207C263 214 252 222 244 227C237 228 229 226 227 221C225 214 228 204 230 197C231 193 232 191 234 189"/>
      </svg>`;
  }
}

class SpeedBall extends HTMLElement {
  constructor() {
    super();
    this.attachShadow({ mode: "open" });
    this.shadowRoot.innerHTML = `
      <style>
        :host { display: flex; position: absolute; left: 986px; top: 611px; width: 70px; height: 25px; align-items: center; background: rgba(236,236,236,.92); border-radius: 13px; font-size: 5.500px; color: #555; }
        .ball { width: 24px; height: 24px; border-radius: 50%; background: linear-gradient(#3b8a63 0 24%, #62cf8a 24%); color: #e8fff0; font-size: 8px; display: flex; align-items: center; justify-content: center; flex: none; }
        .sp { margin-left: 5px; display: grid; grid-template-columns: 11px auto; line-height: 10px; }
        .up { color: #d9673f; } .dn { color: #3bb33b; }
        .plus { margin-left: 3px; width: 10px; height: 10px; background: #5b8fd8; border-radius: 50%; color: #fff; font-size: 9px; line-height: 10px; text-align: center; position: relative; flex: none; }
        .plus::after { content: ""; position: absolute; right: -1px; top: -2px; width: 4px; height: 4px; border-radius: 50%; background: #e0413c; }
      </style>
      <div class="ball">66%</div>
      <div class="sp"><span class="up">↑</span><span>0.2K/s</span><span class="dn">↓</span><span>0.2K/s</span></div>
      <div class="plus">+</div>`;
  }
}

class SiteMark extends HTMLElement {
  constructor() {
    super();
    this.attachShadow({ mode: "open" });
    this.shadowRoot.innerHTML = `
      <style>
        :host { display: flex; position: absolute; left: 910px; top: 632px; align-items: center; gap: 10px; color: #fff; font-family: "Noto Sans CJK SC", sans-serif; }
        .dot { width: 31px; height: 31px; border-radius: 50%; background: #fff; color: #111; font-size: 20px; font-weight: 700; display: flex; align-items: center; justify-content: center; line-height: 1; }
        .txt { font-size: 23px; font-weight: 300; letter-spacing: 0; line-height: 30px; padding-top: 3px; }
      </style>
      <div class="dot">值</div><div class="txt">什么值得买</div>`;
  }
}

customElements.define("excel-app", ExcelApp);
customElements.define("excel-titlebar", ExcelTitlebar);
customElements.define("excel-ribbon", ExcelRibbon);
customElements.define("rb-group", RbGroup);
customElements.define("rb-big", RbBig);
customElements.define("rb-col", RbCol);
customElements.define("rb-small", RbSmall);
customElements.define("rb-sep", RbSep);
customElements.define("rb-collapse", RbCollapse);
customElements.define("excel-formula", ExcelFormula);
customElements.define("excel-sheet", ExcelSheet);
customElements.define("excel-tabs", ExcelTabs);
customElements.define("excel-status", ExcelStatus);
customElements.define("win-taskbar", WinTaskbar);
customElements.define("pen-marks", PenMarks);
customElements.define("speed-ball", SpeedBall);
customElements.define("site-mark", SiteMark);
</script>
</body>
</html>
